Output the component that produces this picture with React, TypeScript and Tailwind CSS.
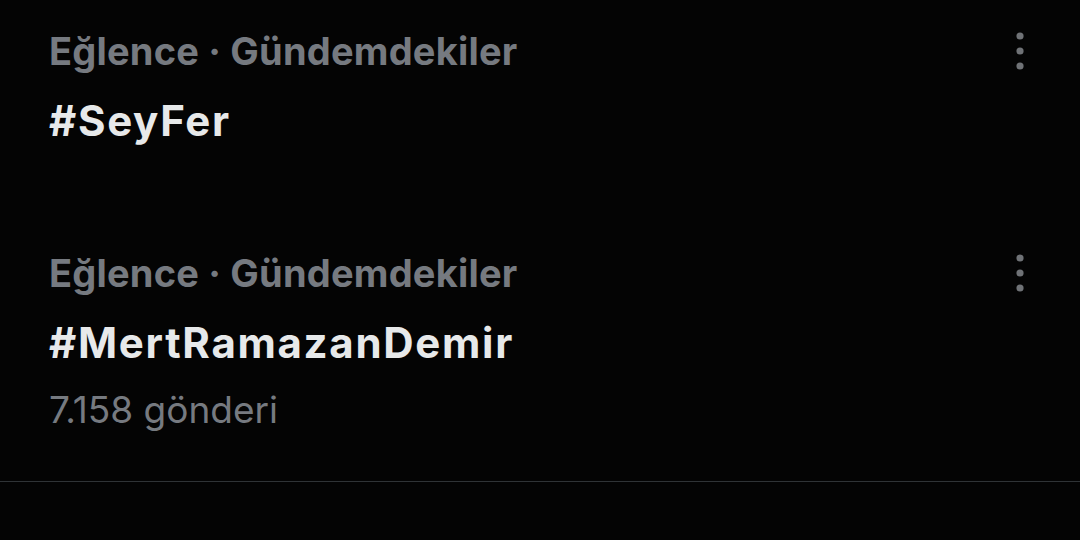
import React from "react";

function Dots() {
  return (
    <svg width="8" height="38" viewBox="0 0 8 38" className="shrink-0">
      <circle cx="4" cy="4" r="3.6" fill="#6f7276" />
      <circle cx="4" cy="19" r="3.6" fill="#6f7276" />
      <circle cx="4" cy="34" r="3.6" fill="#6f7276" />
    </svg>
  );
}

function Row({ children }: { children: React.ReactNode }) {
  return (
    <div className="flex items-center justify-between h-[70px]">
      <div className="text-[38px] leading-[70px] font-bold text-[#767a80] tracking-[0.2px]">{children}</div>
      <Dots />
    </div>
  );
}

export default function App() {
  return (
    <div
      className="w-[1080px] h-[540px] bg-[#040404] overflow-hidden"
      style={{ fontFamily: "Inter, 'Noto Sans', sans-serif" }}
    >
      <div className="pl-[49px] pr-[56px] pt-[16px] pb-[82px]">
        <Row>Eğlence · Gündemdekiler</Row>
        <div className="text-[42px] leading-[70px] font-bold text-[#e7e9ea] tracking-[1.7px]">#SeyFer</div>
      </div>
      <div className="pl-[49px] pr-[56px] pb-[39px] border-b border-[#2f3336]">
        <Row>Eğlence · Gündemdekiler</Row>
        <div className="text-[42px] leading-[70px] font-bold text-[#e7e9ea] tracking-[1.7px]">#MertRamazanDemir</div>
        <div className="text-[37px] leading-[64px] font-normal text-[#767a80]">7.158 gönderi</div>
      </div>
    </div>
  );
}
